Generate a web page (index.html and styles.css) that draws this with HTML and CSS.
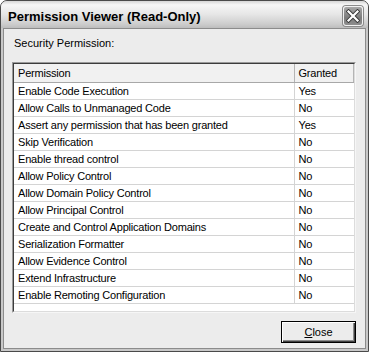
FILE: index.html
```html
<!DOCTYPE html>
<html lang="en">
<head>
    <meta charset="UTF-8">
    <title>Permission Viewer (Read-Only)</title>
    <link rel="stylesheet" href="styles.css">
</head>
<body>
    <div class="window">
        <div class="titlebar">
            <span class="title">Permission Viewer (Read-Only)</span>
            <button class="close-x" title="Close">
                <svg width="14" height="14" viewBox="0 0 14 14">
                    <path d="M2.5 2.5 L11.5 11.5 M11.5 2.5 L2.5 11.5" stroke="#3a3a3a" stroke-width="4" stroke-linecap="square"/>
                    <path d="M2.5 2.5 L11.5 11.5 M11.5 2.5 L2.5 11.5" stroke="#fff" stroke-width="2.2" stroke-linecap="square"/>
                </svg>
            </button>
        </div>
        <div class="client">
            <div class="label">Security Permission:</div>
            <div class="list">
                <div class="list-inner">
                    <table class="grid">
                        <colgroup><col class="col-name"><col></colgroup>
                        <thead>
                            <tr><th>Permission</th><th>Granted</th></tr>
                        </thead>
                        <tbody>
                            <tr><td>Enable Code Execution</td><td>Yes</td></tr>
                            <tr><td>Allow Calls to Unmanaged Code</td><td>No</td></tr>
                            <tr><td>Assert any permission that has been granted</td><td>Yes</td></tr>
                            <tr><td>Skip Verification</td><td>No</td></tr>
                            <tr><td>Enable thread control</td><td>No</td></tr>
                            <tr><td>Allow Policy Control</td><td>No</td></tr>
                            <tr><td>Allow Domain Policy Control</td><td>No</td></tr>
                            <tr><td>Allow Principal Control</td><td>No</td></tr>
                            <tr><td>Create and Control Application Domains</td><td>No</td></tr>
                            <tr><td>Serialization Formatter</td><td>No</td></tr>
                            <tr><td>Allow Evidence Control</td><td>No</td></tr>
                            <tr><td>Extend Infrastructure</td><td>No</td></tr>
                            <tr><td>Enable Remoting Configuration</td><td>No</td></tr>
                        </tbody>
                    </table>
                </div>
            </div>
            <div class="actions">
                <button class="btn"><u>C</u>lose</button>
            </div>
        </div>
    </div>
</body>
</html>
```

FILE: styles.css
```css
/* Page */
body {
    margin: 0;
    padding: 0;
    background-color: #fff;
    font-family: "Liberation Sans", Arial, sans-serif;
    font-size: 11px;
    color: #000;
}

/* Window frame */
.window {
    width: 369px;
    height: 352px;
    box-sizing: border-box;
    border: 1px solid #4a4a4a;
    border-radius: 7px 7px 0 0;
    background-color: #c8c8c8;
    display: flex;
    flex-direction: column;
    overflow: hidden;
}

/* Title bar */
.titlebar {
    height: 27px;
    flex: none;
    display: flex;
    align-items: center;
    justify-content: space-between;
    padding: 0 5px 0 7px;
    background: linear-gradient(to bottom, #d6d6d6 0%, #f6f6f6 14%, #e6e6e6 50%, #cdcdcd 85%, #bdbdbd 100%);
}

.title {
    font-weight: bold;
    font-size: 13px;
    padding-top: 3px;
    color: #000;
}

.close-x {
    width: 20px;
    height: 20px;
    padding: 0;
    margin-top: 2px;
    border: 1px solid #f2f2f2;
    border-radius: 3px;
    background: linear-gradient(to bottom, #a8a8a8, #7c7c7c 60%, #8e8e8e);
    box-shadow: 0 0 0 1px #8a8a8a;
    display: flex;
    align-items: center;
    justify-content: center;
}

/* Client area */
.client {
    flex: 1;
    margin: 0 2px 2px;
    border: 1px solid #8c8c8c;
    background-color: #ececec;
    padding: 7px 9px 0 8px;
    display: flex;
    flex-direction: column;
}

.label {
    line-height: 14px;
    padding-left: 2px;
}

/* List view */
.list {
    margin-top: 12px;
    height: 251px;
    box-sizing: border-box;
    border: 1px solid;
    border-color: #9a9a9a #f6f6f6 #f6f6f6 #9a9a9a;
}

.list-inner {
    height: 100%;
    box-sizing: border-box;
    border: 1px solid;
    border-color: #3c3c3c #dcdcdc #dcdcdc #3c3c3c;
    background-color: #fff;
}

.grid {
    width: 100%;
    border-collapse: collapse;
    table-layout: fixed;
    letter-spacing: -0.2px;
}

.col-name {
    width: 280px;
}

.grid th {
    height: 18px;
    padding: 0 0 0 4px;
    text-align: left;
    font-weight: normal;
    background-color: #f1f1f1;
    border-right: 1px solid #b4b4b4;
    border-bottom: 1px solid #a8a8a8;
}

.grid td {
    height: 16px;
    padding: 0 0 0 4px;
    white-space: nowrap;
    border-bottom: 1px solid #d4d4d4;
}

.grid td:first-child {
    border-right: 1px solid #d4d4d4;
}

/* Buttons */
.actions {
    display: flex;
    justify-content: flex-end;
    margin-top: 8px;
}

.btn {
    width: 75px;
    height: 22px;
    padding: 0;
    font-family: "Liberation Sans", Arial, sans-serif;
    font-size: 11px;
    color: #000;
    background-color: #ececec;
    border: 1px solid #000;
    box-shadow: inset 1px 1px 0 #fff, inset -1px -1px 0 #404040, inset -2px -2px 0 #8a8a8a;
}
```
